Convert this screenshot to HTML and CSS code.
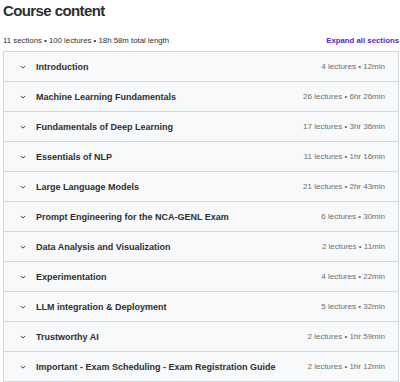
FILE: index.html
```html
<!DOCTYPE html>
<html lang="en">
<head>
    <title>Course content</title>
    <link rel="stylesheet" href="styles.css">
</head>
<body>
    <div class="page">
        <h2 class="title">Course content</h2>

        <div class="summary">
            <span class="stats">11 sections &bull; 100 lectures &bull; 18h 58m total length</span>
            <button class="expand" type="button">Expand all sections</button>
        </div>

        <div class="sections">
            <div class="section">
                <svg class="chevron" viewBox="0 0 8 5"><polyline points="1,1 4,4 7,1"/></svg>
                <span class="name">Introduction</span>
                <span class="meta">4 lectures &bull; 12min</span>
            </div>
            <div class="section">
                <svg class="chevron" viewBox="0 0 8 5"><polyline points="1,1 4,4 7,1"/></svg>
                <span class="name">Machine Learning Fundamentals</span>
                <span class="meta">26 lectures &bull; 6hr 26min</span>
            </div>
            <div class="section">
                <svg class="chevron" viewBox="0 0 8 5"><polyline points="1,1 4,4 7,1"/></svg>
                <span class="name">Fundamentals of Deep Learning</span>
                <span class="meta">17 lectures &bull; 3hr 36min</span>
            </div>
            <div class="section">
                <svg class="chevron" viewBox="0 0 8 5"><polyline points="1,1 4,4 7,1"/></svg>
                <span class="name">Essentials of NLP</span>
                <span class="meta">11 lectures &bull; 1hr 16min</span>
            </div>
            <div class="section">
                <svg class="chevron" viewBox="0 0 8 5"><polyline points="1,1 4,4 7,1"/></svg>
                <span class="name">Large Language Models</span>
                <span class="meta">21 lectures &bull; 2hr 43min</span>
            </div>
            <div class="section">
                <svg class="chevron" viewBox="0 0 8 5"><polyline points="1,1 4,4 7,1"/></svg>
                <span class="name">Prompt Engineering for the NCA-GENL Exam</span>
                <span class="meta">6 lectures &bull; 30min</span>
            </div>
            <div class="section">
                <svg class="chevron" viewBox="0 0 8 5"><polyline points="1,1 4,4 7,1"/></svg>
                <span class="name">Data Analysis and Visualization</span>
                <span class="meta">2 lectures &bull; 11min</span>
            </div>
            <div class="section">
                <svg class="chevron" viewBox="0 0 8 5"><polyline points="1,1 4,4 7,1"/></svg>
                <span class="name">Experimentation</span>
                <span class="meta">4 lectures &bull; 22min</span>
            </div>
            <div class="section">
                <svg class="chevron" viewBox="0 0 8 5"><polyline points="1,1 4,4 7,1"/></svg>
                <span class="name">LLM integration &amp; Deployment</span>
                <span class="meta">5 lectures &bull; 32min</span>
            </div>
            <div class="section">
                <svg class="chevron" viewBox="0 0 8 5"><polyline points="1,1 4,4 7,1"/></svg>
                <span class="name">Trustworthy AI</span>
                <span class="meta">2 lectures &bull; 1hr 59min</span>
            </div>
            <div class="section">
                <svg class="chevron" viewBox="0 0 8 5"><polyline points="1,1 4,4 7,1"/></svg>
                <span class="name">Important - Exam Scheduling - Exam Registration Guide</span>
                <span class="meta">2 lectures &bull; 1hr 12min</span>
            </div>
        </div>
    </div>
</body>
</html>
```

FILE: styles.css
```css
body {
    margin: 0;
    background-color: #fff;
    color: #2d2f31;
    font-family: "Liberation Sans", Arial, sans-serif;
}
.page {
    width: 396px;
    padding-left: 3px;
}
.title {
    margin: 0;
    font-size: 15px;
    line-height: 22px;
    font-weight: bold;
    letter-spacing: -0.6px;
}
.summary {
    display: flex;
    justify-content: space-between;
    align-items: center;
    margin-top: 11px;
    height: 14px;
    margin-bottom: 4px;
}
.stats {
    font-size: 7.8px;
    color: #2d2f31;
}
.expand {
    font-family: "Liberation Sans", Arial, sans-serif;
    font-size: 7.8px;
    font-weight: bold;
    color: #5624d0;
    background: none;
    border: none;
    padding: 0;
}
.sections {
    border: 1px solid #d1d7dc;
    border-top: none;
}
.section {
    display: flex;
    align-items: center;
    height: 29px;
    border-top: 1px solid #d1d7dc;
    background-color: #f7f9fa;
    padding: 0 13px 0 16px;
}
.chevron {
    width: 6px;
    height: 4px;
    fill: none;
    stroke: #2d2f31;
    stroke-width: 1.2;
    margin-right: 10px;
}
.name {
    flex: 1;
    font-size: 9px;
    font-weight: bold;
    color: #2d2f31;
}
.meta {
    font-size: 8px;
    color: #6a6f73;
}
```
